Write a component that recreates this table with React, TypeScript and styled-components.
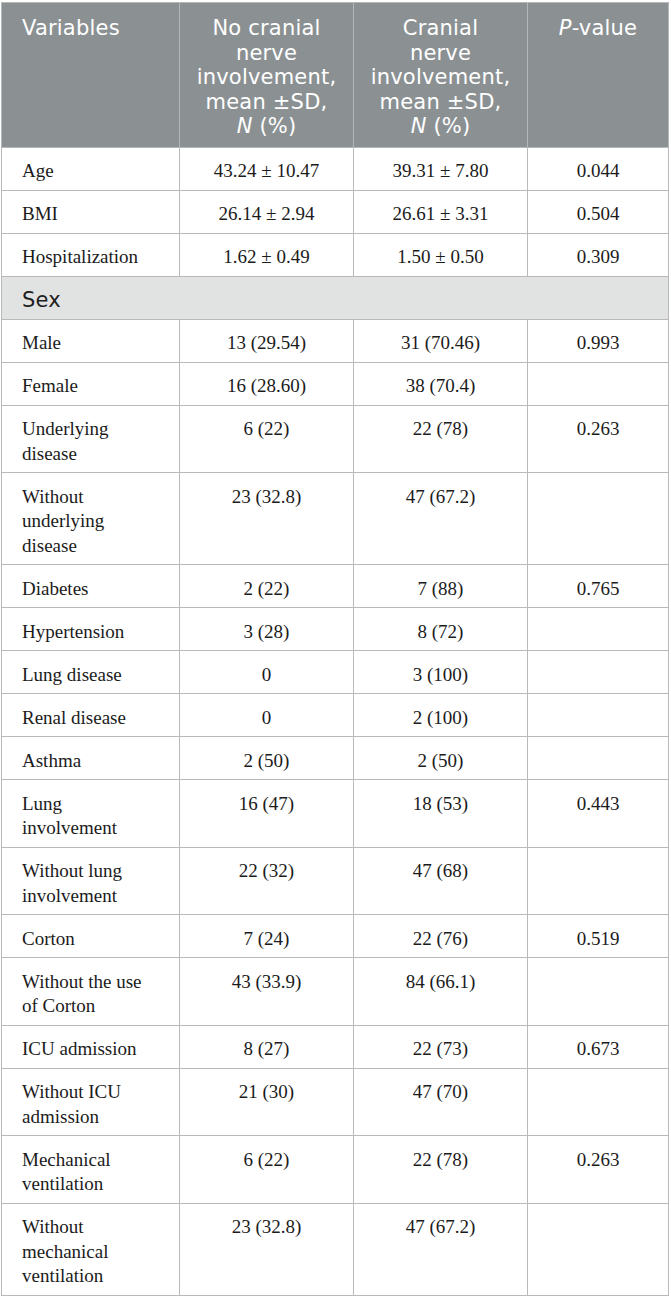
import styled, { createGlobalStyle } from 'styled-components'

const GlobalStyle = createGlobalStyle`
  body {
    margin: 0;
    background: #ffffff;
  }
`;

type Row = {
  label: string;
  none?: string;
  cranial?: string;
  p?: string;
  section?: boolean;
};

const rows: Row[] = [
  { label: 'Age', none: '43.24 ± 10.47', cranial: '39.31 ± 7.80', p: '0.044' },
  { label: 'BMI', none: '26.14 ± 2.94', cranial: '26.61 ± 3.31', p: '0.504' },
  { label: 'Hospitalization', none: '1.62 ± 0.49', cranial: '1.50 ± 0.50', p: '0.309' },
  { label: 'Sex', section: true },
  { label: 'Male', none: '13 (29.54)', cranial: '31 (70.46)', p: '0.993' },
  { label: 'Female', none: '16 (28.60)', cranial: '38 (70.4)' },
  { label: 'Underlying disease', none: '6 (22)', cranial: '22 (78)', p: '0.263' },
  { label: 'Without underlying disease', none: '23 (32.8)', cranial: '47 (67.2)' },
  { label: 'Diabetes', none: '2 (22)', cranial: '7 (88)', p: '0.765' },
  { label: 'Hypertension', none: '3 (28)', cranial: '8 (72)' },
  { label: 'Lung disease', none: '0', cranial: '3 (100)' },
  { label: 'Renal disease', none: '0', cranial: '2 (100)' },
  { label: 'Asthma', none: '2 (50)', cranial: '2 (50)' },
  { label: 'Lung involvement', none: '16 (47)', cranial: '18 (53)', p: '0.443' },
  { label: 'Without lung involvement', none: '22 (32)', cranial: '47 (68)' },
  { label: 'Corton', none: '7 (24)', cranial: '22 (76)', p: '0.519' },
  { label: 'Without the use of Corton', none: '43 (33.9)', cranial: '84 (66.1)' },
  { label: 'ICU admission', none: '8 (27)', cranial: '22 (73)', p: '0.673' },
  { label: 'Without ICU admission', none: '21 (30)', cranial: '47 (70)' },
  { label: 'Mechanical ventilation', none: '6 (22)', cranial: '22 (78)', p: '0.263' },
  { label: 'Without mechanical ventilation', none: '23 (32.8)', cranial: '47 (67.2)' },
];

const App = () => {
  return (
    <>
      <GlobalStyle />
      <Page>
        <Table>
          <colgroup>
            <col style={{ width: 178 }} />
            <col style={{ width: 174 }} />
            <col style={{ width: 174 }} />
            <col style={{ width: 141 }} />
          </colgroup>
          <thead>
            <tr>
              <HeadCell $first>Variables</HeadCell>
              <HeadCell>
                No cranial<br />nerve<br />involvement,<br />mean ±SD,<br />
                <i>N</i> (%)
              </HeadCell>
              <HeadCell>
                Cranial<br />nerve<br />involvement,<br />mean ±SD,<br />
                <i>N</i> (%)
              </HeadCell>
              <HeadCell>
                <i>P</i>-value
              </HeadCell>
            </tr>
          </thead>
          <tbody>
            {rows.map((row) =>
              row.section ? (
                <tr key={row.label}>
                  <SectionCell colSpan={4}>{row.label}</SectionCell>
                </tr>
              ) : (
                <tr key={row.label}>
                  <Cell $first>{row.label}</Cell>
                  <Cell>{row.none}</Cell>
                  <Cell>{row.cranial}</Cell>
                  <Cell>{row.p}</Cell>
                </tr>
              )
            )}
          </tbody>
        </Table>
      </Page>
    </>
  )
}

const Page = styled.div`
  padding: 2px 0 0 1px;
`;

const Table = styled.table`
  width: 667px;
  table-layout: fixed;
  border-collapse: collapse;
  border: 1px solid #b9b9b9;
`;

const HeadCell = styled.th<{ $first?: boolean }>`
  background-color: #8b9193;
  color: #ffffff;
  font-family: "DejaVu Sans", "Open Sans", sans-serif;
  font-weight: 400;
  font-size: 21px;
  line-height: 24.5px;
  letter-spacing: 0.2px;
  text-align: ${(p) => (p.$first ? 'left' : 'center')};
  vertical-align: top;
  padding: ${(p) => (p.$first ? '13px 20px 8px 20px' : '13px 4px 8px 4px')};
  border: 1px solid #b3b8b9;

  i {
    font-style: italic;
  }
`;

const Cell = styled.td<{ $first?: boolean }>`
  font-family: "Liberation Serif", "Times New Roman", serif;
  font-size: 19px;
  line-height: 24.5px;
  color: #1b1b1b;
  text-align: ${(p) => (p.$first ? 'left' : 'center')};
  vertical-align: top;
  padding: 11.5px 20px 6px 20px;
  border: 1px solid #b9b9b9;
`;

const SectionCell = styled.td`
  background-color: #e1e3e3;
  font-family: "DejaVu Sans", "Open Sans", sans-serif;
  font-size: 21px;
  line-height: 24.5px;
  letter-spacing: 0.2px;
  color: #1e1e1e;
  text-align: left;
  padding: 11px 20px 6.5px 20px;
  border: 1px solid #b9b9b9;
`;

export default App
